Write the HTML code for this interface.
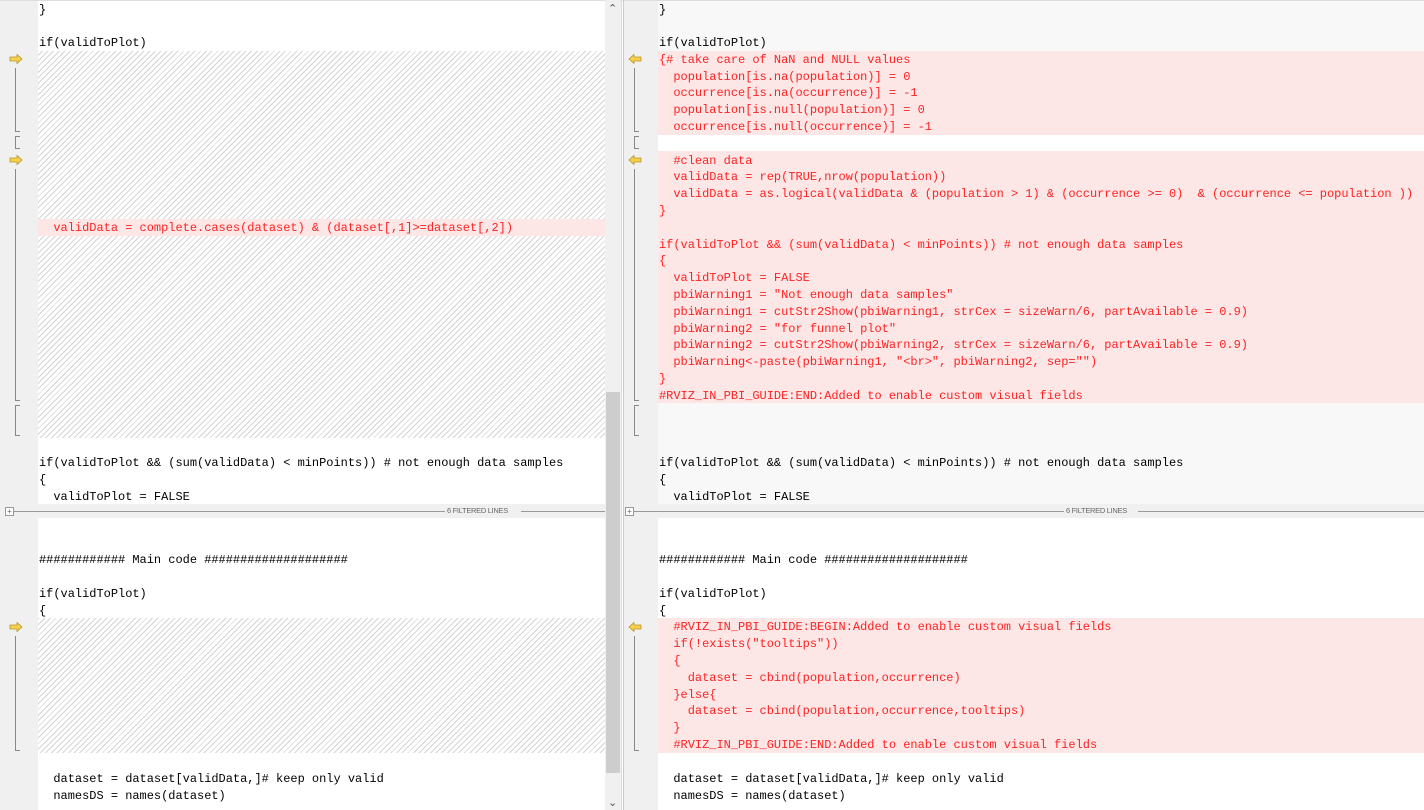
<!DOCTYPE html>
<html><head><meta charset="utf-8"><style>
body{margin:0;width:1424px;height:810px;overflow:hidden;background:#fff;position:relative;font-family:"Liberation Mono",monospace;font-size:11.98px;}
.a{position:absolute}
.g{background:#f0f0f0}
.row{position:absolute;height:17px;line-height:17px;white-space:pre;color:#000;margin-top:1px}
.r{color:#f22}
.pink{position:absolute;background:#fde6e6}
.hatch{position:absolute;background:repeating-linear-gradient(-45deg,#fff 0 3px,#d4d4d4 3px 4px)}
.arr{position:absolute;width:14px;height:10px}
.vl{position:absolute;width:1px;background:#888}
.hl{position:absolute;height:1px;width:5px;background:#888}
</style></head><body>
<div class="a g" style="left:0;top:0;width:38px;height:504px"></div>
<div class="a g" style="left:0;top:518px;width:38px;height:292px"></div>
<div class="a" style="left:658px;top:0;width:766px;height:504px;background:#f8f8f8"></div>
<div class="a g" style="left:624px;top:0;width:34px;height:504px"></div>
<div class="a g" style="left:624px;top:518px;width:34px;height:292px"></div>
<div class="a" style="left:0;top:0;width:1424px;height:1px;background:#ddd"></div>
<div class="a" style="left:605px;top:0;width:16px;height:810px;background:#f0f0f0"></div>
<div class="a" style="left:606px;top:392px;width:14px;height:381px;background:#cdcdcd"></div>
<div class="a" style="left:608px;top:2px;font-family:'Liberation Sans',sans-serif;font-size:11px;color:#555">&#8963;</div>
<div class="a" style="left:608px;top:796px;font-family:'Liberation Sans',sans-serif;font-size:11px;color:#555">&#8964;</div>
<div class="a" style="left:621px;top:0;width:1px;height:810px;background:#ddd"></div>
<div class="a" style="left:623px;top:0;width:1px;height:810px;background:#ccc"></div>
<div class="a g" style="left:0;top:504px;width:605px;height:14px"></div>
<div class="a g" style="left:624px;top:504px;width:800px;height:14px"></div>
<div class="a" style="left:14px;top:511px;width:431px;height:1px;background:#999"></div>
<div class="a" style="left:521px;top:511px;width:84px;height:1px;background:#999"></div>
<div class="a" style="left:634px;top:511px;width:430px;height:1px;background:#999"></div>
<div class="a" style="left:1138px;top:511px;width:286px;height:1px;background:#999"></div>
<div class="a" style="left:447px;top:506px;font-family:'Liberation Sans',sans-serif;font-size:7.5px;color:#666;letter-spacing:-0.3px">6 FILTERED LINES</div>
<div class="a" style="left:1066px;top:506px;font-family:'Liberation Sans',sans-serif;font-size:7.5px;color:#666;letter-spacing:-0.3px">6 FILTERED LINES</div>
<div class="a" style="left:5px;top:507px;width:7px;height:7px;border:1px solid #999;background:#fff;font-size:8px;line-height:7px;text-align:center;color:#666;font-family:'Liberation Sans'">+</div>
<div class="a" style="left:625px;top:507px;width:7px;height:7px;border:1px solid #999;background:#fff;font-size:8px;line-height:7px;text-align:center;color:#666;font-family:'Liberation Sans'">+</div>

<div class="hatch" style="left:38px;top:51px;width:567px;height:387px"></div>
<div class="pink" style="left:38px;top:219px;width:567px;height:17px"></div>
<div class="pink" style="left:658px;top:51px;width:766px;height:84px"></div>
<div class="pink" style="left:658px;top:151px;width:766px;height:252px"></div>
<div class="a" style="left:658px;top:135px;width:766px;height:16px;background:#fff"></div>
<div class="hatch" style="left:38px;top:618px;width:567px;height:135px"></div>
<div class="pink" style="left:658px;top:618px;width:766px;height:135px"></div>

<svg class="arr" style="left:9px;top:54px" viewBox="0 0 14 10"><path d="M1 3H8V0.5L13 5 8 9.5V7H1Z" fill="#f5d04a" stroke="#b8962a" stroke-width="0.8"/></svg>
<svg class="arr" style="left:9px;top:155px" viewBox="0 0 14 10"><path d="M1 3H8V0.5L13 5 8 9.5V7H1Z" fill="#f5d04a" stroke="#b8962a" stroke-width="0.8"/></svg>
<svg class="arr" style="left:9px;top:622px" viewBox="0 0 14 10"><path d="M1 3H8V0.5L13 5 8 9.5V7H1Z" fill="#f5d04a" stroke="#b8962a" stroke-width="0.8"/></svg>
<svg class="arr" style="left:628px;top:54px" viewBox="0 0 14 10"><path d="M13 3H6V0.5L1 5 6 9.5V7H13Z" fill="#f5d04a" stroke="#b8962a" stroke-width="0.8"/></svg>
<svg class="arr" style="left:628px;top:155px" viewBox="0 0 14 10"><path d="M13 3H6V0.5L1 5 6 9.5V7H13Z" fill="#f5d04a" stroke="#b8962a" stroke-width="0.8"/></svg>
<svg class="arr" style="left:628px;top:622px" viewBox="0 0 14 10"><path d="M13 3H6V0.5L1 5 6 9.5V7H13Z" fill="#f5d04a" stroke="#b8962a" stroke-width="0.8"/></svg>
<div class="vl" style="left:15px;top:68px;height:64px"></div><div class="hl" style="left:15px;top:131px"></div>
<div class="vl" style="left:15px;top:136px;height:13px"></div><div class="hl" style="left:15px;top:136px"></div><div class="hl" style="left:15px;top:148px"></div>
<div class="vl" style="left:15px;top:169px;height:232px"></div><div class="hl" style="left:15px;top:400px"></div>
<div class="vl" style="left:15px;top:405px;height:31px"></div><div class="hl" style="left:15px;top:405px"></div><div class="hl" style="left:15px;top:435px"></div>
<div class="vl" style="left:15px;top:636px;height:115px"></div><div class="hl" style="left:15px;top:750px"></div>
<div class="vl" style="left:634px;top:68px;height:64px"></div><div class="hl" style="left:634px;top:131px"></div>
<div class="vl" style="left:634px;top:136px;height:13px"></div><div class="hl" style="left:634px;top:136px"></div><div class="hl" style="left:634px;top:148px"></div>
<div class="vl" style="left:634px;top:169px;height:232px"></div><div class="hl" style="left:634px;top:400px"></div>
<div class="vl" style="left:634px;top:405px;height:31px"></div><div class="hl" style="left:634px;top:405px"></div><div class="hl" style="left:634px;top:435px"></div>
<div class="vl" style="left:634px;top:636px;height:115px"></div><div class="hl" style="left:634px;top:750px"></div>

<div class="row" style="left:39px;top:1px">}</div>
<div class="row" style="left:39px;top:34px">if(validToPlot)</div>
<div class="row r" style="left:39px;top:219px">  validData = complete.cases(dataset) &amp; (dataset[,1]&gt;=dataset[,2])</div>
<div class="row" style="left:39px;top:454px">if(validToPlot &amp;&amp; (sum(validData) &lt; minPoints)) # not enough data samples</div>
<div class="row" style="left:39px;top:471px">{</div>
<div class="row" style="left:39px;top:488px">  validToPlot = FALSE</div>
<div class="row" style="left:39px;top:551px">############ Main code ####################</div>
<div class="row" style="left:39px;top:585px">if(validToPlot)</div>
<div class="row" style="left:39px;top:602px">{</div>
<div class="row" style="left:39px;top:770px">  dataset = dataset[validData,]# keep only valid</div>
<div class="row" style="left:39px;top:787px">  namesDS = names(dataset)</div>

<div class="row" style="left:659px;top:1px">}</div>
<div class="row" style="left:659px;top:34px">if(validToPlot)</div>
<div class="row r" style="left:659px;top:51px">{# take care of NaN and NULL values</div>
<div class="row r" style="left:659px;top:68px">  population[is.na(population)] = 0</div>
<div class="row r" style="left:659px;top:84px">  occurrence[is.na(occurrence)] = -1</div>
<div class="row r" style="left:659px;top:101px">  population[is.null(population)] = 0</div>
<div class="row r" style="left:659px;top:118px">  occurrence[is.null(occurrence)] = -1</div>
<div class="row r" style="left:659px;top:152px">  #clean data</div>
<div class="row r" style="left:659px;top:168px">  validData = rep(TRUE,nrow(population))</div>
<div class="row r" style="left:659px;top:185px">  validData = as.logical(validData &amp; (population &gt; 1) &amp; (occurrence &gt;= 0)  &amp; (occurrence &lt;= population ))</div>
<div class="row r" style="left:659px;top:202px">}</div>
<div class="row r" style="left:659px;top:236px">if(validToPlot &amp;&amp; (sum(validData) &lt; minPoints)) # not enough data samples</div>
<div class="row r" style="left:659px;top:252px">{</div>
<div class="row r" style="left:659px;top:269px">  validToPlot = FALSE</div>
<div class="row r" style="left:659px;top:286px">  pbiWarning1 = "Not enough data samples"</div>
<div class="row r" style="left:659px;top:303px">  pbiWarning1 = cutStr2Show(pbiWarning1, strCex = sizeWarn/6, partAvailable = 0.9)</div>
<div class="row r" style="left:659px;top:320px">  pbiWarning2 = "for funnel plot"</div>
<div class="row r" style="left:659px;top:336px">  pbiWarning2 = cutStr2Show(pbiWarning2, strCex = sizeWarn/6, partAvailable = 0.9)</div>
<div class="row r" style="left:659px;top:353px">  pbiWarning&lt;-paste(pbiWarning1, "&lt;br&gt;", pbiWarning2, sep="")</div>
<div class="row r" style="left:659px;top:370px">}</div>
<div class="row r" style="left:659px;top:387px">#RVIZ_IN_PBI_GUIDE:END:Added to enable custom visual fields</div>
<div class="row" style="left:659px;top:454px">if(validToPlot &amp;&amp; (sum(validData) &lt; minPoints)) # not enough data samples</div>
<div class="row" style="left:659px;top:471px">{</div>
<div class="row" style="left:659px;top:488px">  validToPlot = FALSE</div>
<div class="row" style="left:659px;top:551px">############ Main code ####################</div>
<div class="row" style="left:659px;top:585px">if(validToPlot)</div>
<div class="row" style="left:659px;top:602px">{</div>
<div class="row r" style="left:659px;top:618px">  #RVIZ_IN_PBI_GUIDE:BEGIN:Added to enable custom visual fields</div>
<div class="row r" style="left:659px;top:635px">  if(!exists("tooltips"))</div>
<div class="row r" style="left:659px;top:652px">  {</div>
<div class="row r" style="left:659px;top:669px">    dataset = cbind(population,occurrence)</div>
<div class="row r" style="left:659px;top:686px">  }else{</div>
<div class="row r" style="left:659px;top:702px">    dataset = cbind(population,occurrence,tooltips)</div>
<div class="row r" style="left:659px;top:719px">  }</div>
<div class="row r" style="left:659px;top:736px">  #RVIZ_IN_PBI_GUIDE:END:Added to enable custom visual fields</div>
<div class="row" style="left:659px;top:770px">  dataset = dataset[validData,]# keep only valid</div>
<div class="row" style="left:659px;top:787px">  namesDS = names(dataset)</div>
</body></html>
